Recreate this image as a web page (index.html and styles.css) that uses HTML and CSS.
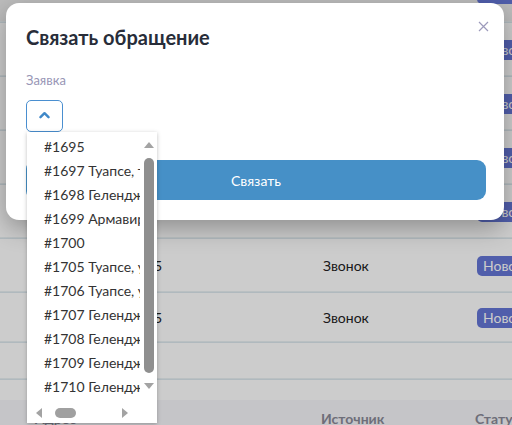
FILE: index.html
```html
<!DOCTYPE html>
<html lang="ru">
<head>
<meta charset="utf-8">
<title>Связать обращение</title>
<link rel="stylesheet" href="styles.css">
</head>
<body>
<div class="page">
  <div class="table">
    <div class="row row-top"><span class="c-date"></span><span class="c-src"></span><span class="badge">Новое</span></div>
    <div class="row"><span class="c-date">2025</span><span class="c-src">Звонок</span><span class="badge">Новое</span></div>
    <div class="row"><span class="c-date">2025</span><span class="c-src">Звонок</span><span class="badge">Новое</span></div>
    <div class="row"><span class="c-date">2025</span><span class="c-src">Звонок</span><span class="badge">Новое</span></div>
    <div class="row"><span class="c-date">2025</span><span class="c-src">Звонок</span><span class="badge">Новое</span></div>
    <div class="row"><span class="c-date">2025</span><span class="c-src">Звонок</span><span class="badge">Новое</span></div>
    <div class="row row-b"><span class="c-date">2025</span><span class="c-src">Звонок</span><span class="badge">Новое</span></div>
    <div class="row row-c"></div>
    <div class="gap"></div>
    <div class="thead"><span class="c-date h">Адрес</span><span class="c-src h">Источник</span><span class="h h-status">Статус</span></div>
  </div>
  <div class="overlay"></div>

  <div class="modal">
    <h2 class="title">Связать обращение</h2>
    <button class="close" aria-label="Закрыть">
      <svg width="11" height="11" viewBox="0 0 11 11"><path d="M1 1L10 10M10 1L1 10" stroke="#9c9abb" stroke-width="1.2" fill="none"/></svg>
    </button>
    <div class="label">Заявка</div>
    <div class="select">
      <svg width="11" height="8" viewBox="0 0 11 8"><path d="M1.5 6.2L5.5 2.2L9.5 6.2" stroke="#3f88c8" stroke-width="2.4" fill="none" stroke-linecap="round" stroke-linejoin="round"/></svg>
    </div>
    <button class="btn">Связать</button>
  </div>

  <div class="listbox">
    <div class="list-main">
      <ul class="items">
        <li>#1695</li>
        <li>#1697 Туапсе, тер. СНТ</li>
        <li>#1698 Геленджик, ул. Мира</li>
        <li>#1699 Армавир, ул. Кирова</li>
        <li>#1700</li>
        <li>#1705 Туапсе, ул. Полетаева</li>
        <li>#1706 Туапсе, ул. Горького</li>
        <li>#1707 Геленджик, ул. Луначарского</li>
        <li>#1708 Геленджик, ул. Островского</li>
        <li>#1709 Геленджик, ул. Садовая</li>
        <li>#1710 Геленджик, ул. Крымская</li>
      </ul>
      <div class="vscroll">
        <span class="arr-up"></span>
        <span class="vthumb"></span>
        <span class="arr-down"></span>
      </div>
    </div>
    <div class="hscroll">
      <span class="arr-left"></span>
      <span class="hthumb"></span>
      <span class="arr-right"></span>
    </div>
  </div>
</div>
</body>
</html>
```

FILE: styles.css
```css
* { box-sizing: border-box; }
html, body { margin: 0; padding: 0; }
body {
  font-family: Lato, "Open Sans", "Liberation Sans", sans-serif;
  background: #ffffff;
}
.page {
  position: relative;
  width: 512px;
  height: 425px;
  overflow: hidden;
  background: #ffffff;
}

/* background table */
.table {
  display: flex;
  flex-direction: column;
  margin-top: -31px;
}
.row {
  height: 54px;
  flex: none;
  display: flex;
  align-items: center;
  border-bottom: 1px solid #dde8ee;
  box-shadow: inset 0 -4px 0 -3px #e9f0f3;
  position: relative;
  font-size: 14px;
  color: #222;
}
.row-top { background: #ececec; align-items: flex-end; padding-bottom: 18px; }
.row-b { height: 50px; }
.row-c { height: 37px; }
.gap { height: 20px; flex: none; }
.c-date {
  width: 162px;
  text-align: right;
  flex: none;
}
.c-src {
  margin-left: 161px;
  width: 154px;
  flex: none;
}
.badge {
  flex: none;
  background: #6576d6;
  color: #fff;
  border-radius: 5px;
  height: 20px;
  line-height: 20px;
  padding: 0 6px;
  font-size: 14px;
}
.thead {
  height: 40px;
  flex: none;
  background: #f7f7fb;
  display: flex;
  align-items: flex-start;
  padding-top: 10px;
  line-height: 17px;
}
.h { color: #8a8a98; font-weight: 700; font-size: 14px; }
.thead .c-date { width: auto; margin-left: 35px; text-align: left; }
.thead .c-src { margin-left: 245px; }

.overlay {
  position: absolute;
  inset: 0;
  background: rgba(0, 0, 0, 0.2);
}

/* modal */
.modal {
  position: absolute;
  left: 6px;
  top: 3px;
  width: 498px;
  height: 217px;
  background: #ffffff;
  border-radius: 13px;
  padding: 22px 18px 20px 20px;
  box-shadow: 0 8px 24px rgba(0, 0, 0, 0.3);
  display: flex;
  flex-direction: column;
  align-items: flex-start;
}
.title {
  margin: 0;
  font-family: Lato, sans-serif;
  font-weight: 700;
  font-size: 20px;
  line-height: 24px;
  color: #282d39;
  letter-spacing: 0;
}
.close {
  position: absolute;
  right: 15px;
  top: 18px;
  width: 11px;
  height: 11px;
  padding: 0;
  border: 0;
  background: none;
  display: flex;
}
.label {
  margin-top: 23px;
  font-size: 13px;
  line-height: 16px;
  color: #9896b6;
}
.select {
  margin-top: 12px;
  width: 37px;
  height: 32px;
  border: 1px solid #4a8fd0;
  border-radius: 5px;
  display: flex;
  align-items: center;
  justify-content: center;
  padding-bottom: 2px;
}
.btn {
  margin-top: 28px;
  width: 460px;
  height: 40px;
  border: 0;
  border-radius: 9px;
  background: #4690c7;
  color: #ffffff;
  font-family: Lato, sans-serif;
  font-size: 14px;
}

/* native-like listbox popup */
.listbox {
  position: absolute;
  left: 27px;
  top: 132px;
  width: 130px;
  height: 291px;
  background: #ffffff;
  box-shadow: 0 1px 4px rgba(0, 0, 0, 0.25);
  display: flex;
  flex-direction: column;
}
.list-main {
  flex: 1;
  display: flex;
  min-height: 0;
}
.items {
  list-style: none;
  margin: 0;
  padding: 3px 0 0 0;
  flex: 1;
  overflow: hidden;
  white-space: nowrap;
}
.items li {
  height: 24px;
  line-height: 24px;
  padding-left: 17px;
  font-size: 14px;
  color: #333333;
  overflow: hidden;
}
.vscroll {
  width: 17px;
  flex: none;
  display: flex;
  flex-direction: column;
  align-items: center;
  background: #ffffff;
  padding-top: 10px;
}
.arr-up {
  width: 0; height: 0;
  border-left: 5px solid transparent;
  border-right: 5px solid transparent;
  border-bottom: 6px solid #a3a3a3;
}
.vthumb {
  margin-top: 10px;
  width: 10px;
  height: 215px;
  background: #8f8f8f;
  border-radius: 5px;
}
.arr-down {
  margin-top: 10px;
  width: 0; height: 0;
  border-left: 5px solid transparent;
  border-right: 5px solid transparent;
  border-top: 6px solid #a3a3a3;
}
.hscroll {
  height: 20px;
  flex: none;
  display: flex;
  align-items: center;
  padding-left: 9px;
  padding-right: 29px;
}
.arr-left {
  width: 0; height: 0;
  border-top: 5px solid transparent;
  border-bottom: 5px solid transparent;
  border-right: 6px solid #a3a3a3;
}
.hthumb {
  margin-left: 13px;
  width: 21px;
  height: 10px;
  background: #a0a0a0;
  border-radius: 5px;
}
.arr-right {
  margin-left: auto;
  width: 0; height: 0;
  border-top: 5px solid transparent;
  border-bottom: 5px solid transparent;
  border-left: 6px solid #a3a3a3;
}
```
